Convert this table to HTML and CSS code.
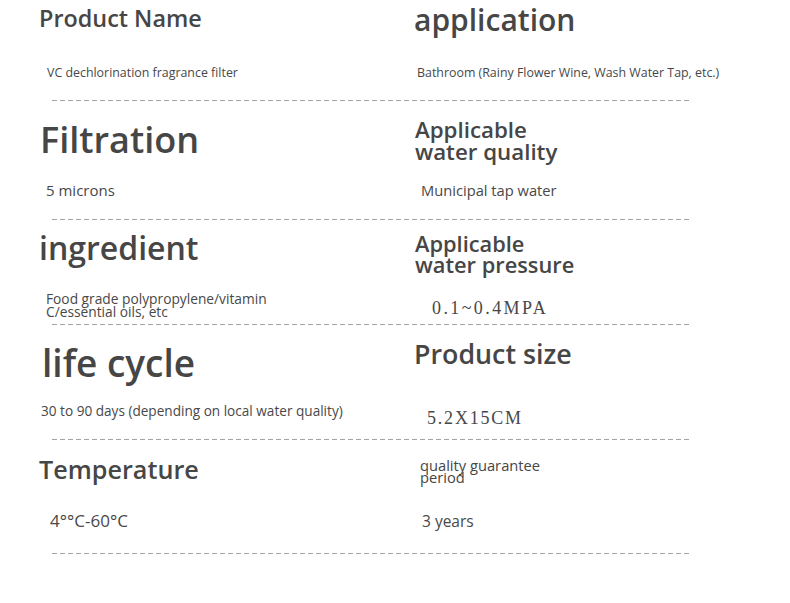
FILE: index.html
```html
<!DOCTYPE html>
<html lang="en">
<head>
<meta charset="utf-8">
<title>Product specifications</title>
<link rel="stylesheet" href="styles.css">
</head>
<body>
<main class="spec">
  <section class="row row-1">
    <div class="cell">
      <h2 class="title t-name">Product Name</h2>
      <p class="value v-name">VC dechlorination fragrance filter</p>
    </div>
    <div class="cell">
      <h2 class="title t-app">application</h2>
      <p class="value v-app">Bathroom (Rainy Flower Wine, Wash Water Tap, etc.)</p>
    </div>
  </section>
  <div class="sep"></div>

  <section class="row row-2">
    <div class="cell">
      <h2 class="title t-filt">Filtration</h2>
      <p class="value v-filt">5 microns</p>
    </div>
    <div class="cell">
      <h2 class="title t-quality">Applicable<br>water quality</h2>
      <p class="value v-quality">Municipal tap water</p>
    </div>
  </section>
  <div class="sep"></div>

  <section class="row row-3">
    <div class="cell">
      <h2 class="title t-ingr">ingredient</h2>
      <p class="value v-ingr">Food grade polypropylene/vitamin<br>C/essential oils, etc</p>
    </div>
    <div class="cell">
      <h2 class="title t-press">Applicable<br>water pressure</h2>
      <p class="value serif v-press">0.1~0.4MPA</p>
    </div>
  </section>
  <div class="sep"></div>

  <section class="row row-4">
    <div class="cell">
      <h2 class="title t-life">life cycle</h2>
      <p class="value v-life">30 to 90 days (depending on local water quality)</p>
    </div>
    <div class="cell">
      <h2 class="title t-size">Product size</h2>
      <p class="value serif v-size">5.2X15CM</p>
    </div>
  </section>
  <div class="sep"></div>

  <section class="row row-5">
    <div class="cell">
      <h2 class="title t-temp">Temperature</h2>
      <p class="value v-temp">4°°C-60°C</p>
    </div>
    <div class="cell">
      <h2 class="title t-guar">quality guarantee<br>period</h2>
      <p class="value v-guar">3 years</p>
    </div>
  </section>
  <div class="sep"></div>
</main>
</body>
</html>
```

FILE: styles.css
```css
* { box-sizing: border-box; }

html, body {
  margin: 0;
  padding: 0;
  background: #ffffff;
}

body {
  font-family: "Open Sans", "Noto Sans", sans-serif;
  color: #4a4a4a;
  width: 790px;
  height: 603px;
  overflow: hidden;
}

.spec {
  display: flex;
  flex-direction: column;
}

.row {
  display: grid;
  padding-left: 39px;
  grid-template-columns: 375px 1fr;
}

.row-1 { height: 100px; }
.row-2 { height: 118px; }
.row-3 { height: 104px; }
.row-4 { height: 114px; }
.row-5 { height: 113px; }

.cell {
  display: flex;
  flex-direction: column;
  align-items: flex-start;
}

.title {
  margin: 0;
  font-weight: 600;
  color: #464646;
  white-space: nowrap;
}

.value {
  margin: 0;
  font-weight: 500;
  color: #484848;
  white-space: nowrap;
}

.serif {
  font-family: "Liberation Serif", "Times New Roman", serif;
  font-weight: 400;
  font-size: 18px;
  line-height: 20px;
  letter-spacing: 1.8px;
}

.sep {
  margin-left: 52px;
  width: 640px;
  height: 1px;
  background: repeating-linear-gradient(to right, #a3a3a3 0 5px, transparent 5px 8px);
}

/* Row 1 */
.t-name { font-size: 23.4px; line-height: 28px; margin-top: 4px; }
.v-name { font-size: 12.4px; line-height: 16px; margin-top: 33px; padding-left: 8px; }
.t-app { font-size: 30px; line-height: 34px; margin-top: 3px; }
.v-app { font-size: 12.4px; line-height: 16px; margin-top: 28px; padding-left: 3px; }

/* Row 2 */
.t-filt { font-size: 36px; line-height: 40px; margin-top: 19px; padding-left: 1px; }
.v-filt { font-size: 15px; line-height: 18px; margin-top: 21px; padding-left: 7px; }
.t-quality { font-size: 22.3px; line-height: 22px; margin-top: 18px; padding-left: 1px; }
.v-quality { font-size: 14.7px; line-height: 18px; margin-top: 18px; padding-left: 7px; }

/* Row 3 */
.t-ingr { font-size: 32px; line-height: 36px; margin-top: 10px; }
.v-ingr { font-size: 13.75px; line-height: 13px; margin-top: 26px; padding-left: 7px; }
.t-press { font-size: 21.8px; line-height: 21px; margin-top: 13px; padding-left: 1px; }
.v-press { margin-top: 23px; padding-left: 18px; letter-spacing: 2.4px; }

/* Row 4 */
.t-life { font-size: 37px; line-height: 40px; margin-top: 18px; padding-left: 3px; }
.v-life { font-size: 13.6px; line-height: 16px; margin-top: 20px; padding-left: 2px; }
.t-size { font-size: 26.8px; line-height: 30px; margin-top: 14px; }
.v-size { margin-top: 39px; padding-left: 13px; }

/* Row 5 */
.t-temp { font-size: 25.2px; line-height: 30px; margin-top: 14px; }
.v-temp { font-size: 17px; line-height: 18px; margin-top: 28px; padding-left: 11px; }
.t-guar { font-size: 14.7px; line-height: 12px; margin-top: 19px; padding-left: 6px; font-weight: 500; }
.v-guar { font-size: 15.5px; line-height: 18px; margin-top: 29px; padding-left: 8px; }
```
